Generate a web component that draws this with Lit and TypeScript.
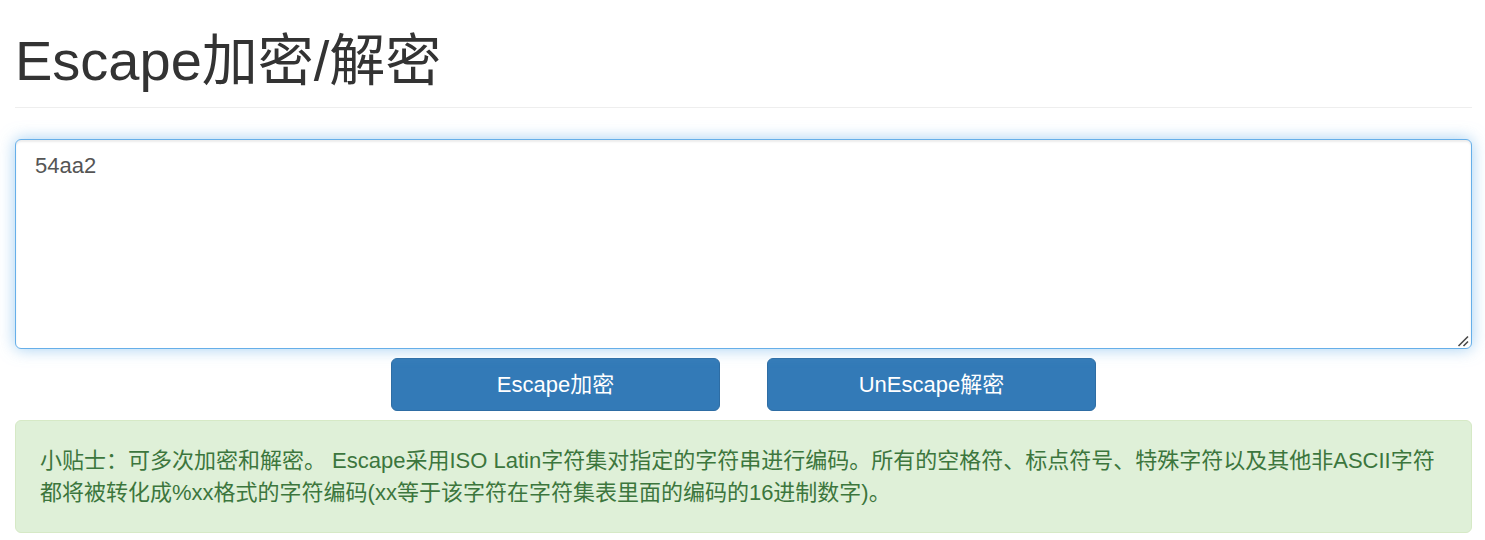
import { LitElement, html, css } from "lit";
import { customElement, state } from "lit/decorators.js";

@customElement("app-root")
export class AppRoot extends LitElement {
  static styles = css`
    :host {
      display: block;
      box-sizing: border-box;
      padding: 30px 13px 7px 15px;
      background: #fff;
      color: #333;
      font: 22px/32px "Liberation Sans", "Noto Sans CJK SC", sans-serif;
    }
    *, *::before, *::after { box-sizing: border-box; }
    h1 {
      margin: 0 0 31px;
      padding-bottom: 15px;
      border-bottom: 1px solid #eee;
      font-size: 56px;
      line-height: 62px;
      font-weight: 400;
    }
    .field {
      position: relative;
    }
    .source {
      display: block;
      width: 100%;
      height: 210px;
      padding: 10px 19px;
      border: 1px solid #66afe9;
      border-radius: 6px;
      outline: 0;
      background: #fff;
      color: #555;
      font: inherit;
      resize: vertical;
      box-shadow: inset 0 2px 2px rgba(0, 0, 0, 0.075), 0 0 16px rgba(102, 175, 233, 0.6);
    }
    .source::-webkit-resizer {
      background: transparent;
    }
    .grip {
      position: absolute;
      right: 3px;
      bottom: 2px;
      width: 12px;
      height: 12px;
      fill: none;
      stroke: #4a4a4a;
      stroke-width: 1.6;
      pointer-events: none;
    }
    .actions {
      display: flex;
      justify-content: center;
      gap: 47px;
      padding: 9px 0;
    }
    .btn {
      width: 329px;
      padding: 10px 18px 9px;
      border: 1px solid #2e6da4;
      border-radius: 6px;
      background: #337ab7;
      color: #fff;
      font: inherit;
      cursor: pointer;
    }
    .tip {
      margin: 0;
      padding: 24px 24px 23px;
      border: 1px solid #d6e9c6;
      border-radius: 6px;
      background: #dff0d8;
      color: #3c763d;
    }
  `;

  @state() private text = "54aa2";

  private encode() {
    this.text = (globalThis as any).escape(this.text);
  }

  private decode() {
    this.text = (globalThis as any).unescape(this.text);
  }

  render() {
    return html`
      <h1 id="title">Escape加密/解密</h1>
      <div class="field">
        <textarea
          class="source"
          aria-labelledby="title"
          spellcheck="false"
          .value=${this.text}
          @input=${(e: Event) => (this.text = (e.target as HTMLTextAreaElement).value)}
        ></textarea>
        <svg class="grip" viewBox="0 0 12 12" aria-hidden="true">
          <path d="M1.5 11 11 1.5M6.5 11 11 6.5" />
        </svg>
      </div>
      <div class="actions">
        <button class="btn" type="button" @click=${this.encode}>Escape加密</button>
        <button class="btn" type="button" @click=${this.decode}>UnEscape解密</button>
      </div>
      <p class="tip">
        小贴士：可多次加密和解密。 Escape采用ISO Latin字符集对指定的字符串进行编码。所有的空格符、标点符号、特殊字符以及其他非ASCII字符都将被转化成%xx格式的字符编码(xx等于该字符在字符集表里面的编码的16进制数字)。
      </p>
    `;
  }
}
